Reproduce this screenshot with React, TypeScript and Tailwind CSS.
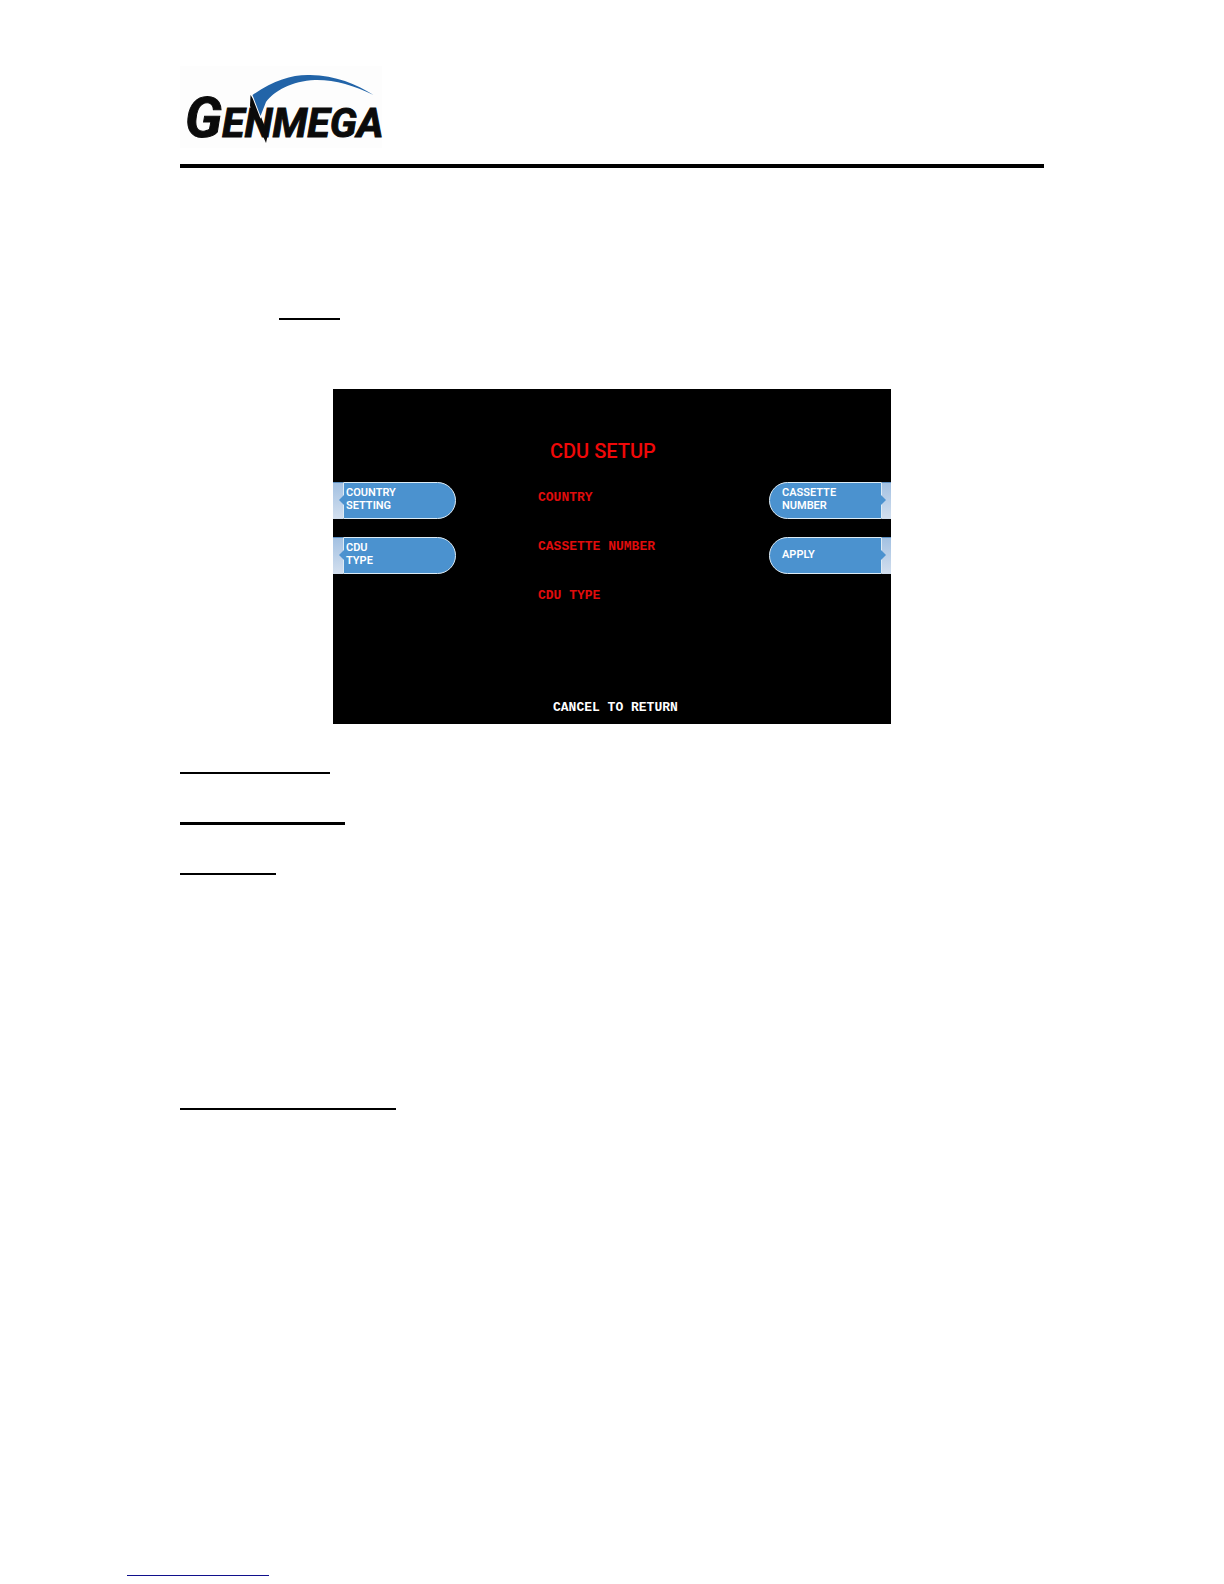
import clsx from "clsx";

const leftKeys = [
    { id: "country", lines: ["COUNTRY", "SETTING"] },
    { id: "type", lines: ["CDU", "TYPE"] }
];

const rightKeys = [
    { id: "cassette", lines: ["CASSETTE", "NUMBER"] },
    { id: "apply", lines: ["APPLY"] }
];

const fields = ["COUNTRY", "CASSETTE NUMBER", "CDU TYPE"];

function Logo() {
    return (
        <svg width="204" height="88" viewBox="0 0 204 88" role="img" aria-label="Genmega" className="block">
            <rect x="0" y="2" width="202" height="82" fill="#fdfdfd" />
            <text
                x="5"
                y="73"
                fill="#0b0b0b"
                stroke="#0b0b0b"
                strokeWidth="1"
                className="font-[Roboto,sans-serif] font-bold italic"
            >
                <tspan fontSize="56">G</tspan>
                <tspan fontSize="41">ENMEGA</tspan>
            </text>
            {/* spike running down through the N */}
            <path d="M70.500 31 L74 36 L88 70 L86 79 L82 70 L70 42 Z" fill="#0b0b0b" />
            {/* swoosh */}
            <path
                d="M72.500 31 C94 16 112 10.500 130 11 C156 11.500 176 20 193.500 31 C174 21.500 154 15.500 135 16 C112 17 94 27 86 38 L80.500 52 Z"
                fill="#2264a8"
                stroke="#fdfdfd"
                strokeWidth="2"
                paintOrder="stroke"
            />
        </svg>
    );
}

function SoftKey({ lines, side }: { lines: string[]; side: "left" | "right" }) {
    const isLeft = side === "left";

    return (
        <button type="button" className={clsx("flex h-[37px] w-full text-left", !isLeft && "flex-row-reverse")}>
            <span
                className={clsx(
                    "relative h-full shrink-0 border-t border-[#5d8fc0] bg-gradient-to-b from-[#a3c1e2] to-[#d3dfee]",
                    isLeft ? "w-[10px]" : "w-[9px]"
                )}
            >
                <svg
                    width="5"
                    height="10"
                    viewBox="0 0 5 10"
                    className={clsx("absolute top-3 z-10", isLeft ? "-right-px" : "-left-px rotate-180")}
                >
                    <path d="M5 0 L0 5 L5 10 Z" fill="#4b92cf" />
                </svg>
            </span>
            <span
                className={clsx(
                    "flex h-full flex-1 flex-col justify-center border border-[#dcebf5] bg-[#4b92cf] pb-[3px] font-[Roboto,sans-serif] text-[11px] leading-[13px] font-semibold text-white",
                    isLeft ? "rounded-r-full pl-[2px]" : "rounded-l-full pl-3"
                )}
            >
                {lines.map((line) => (
                    <span key={line}>{line}</span>
                ))}
            </span>
        </button>
    );
}

function CduScreen() {
    return (
        <section className="mx-auto mt-[69px] w-full max-w-[558px] bg-black pt-12 pb-[9px]">
            <h1 className="pl-[217px] font-[Roboto,sans-serif] text-[20px] leading-7 font-medium text-[#f00808]">CDU SETUP</h1>

            <div className="mt-[17px] flex">
                <div className="flex w-[123px] flex-col gap-[18px]">
                    {leftKeys.map((key) => (
                        <SoftKey key={key.id} lines={key.lines} side="left" />
                    ))}
                </div>
                <ul className="flex flex-1 flex-col gap-[34px] pt-2 pl-[82px] font-['Liberation_Mono',monospace] text-[13px] leading-[15px] font-bold text-[#e00c0c]">
                    {fields.map((field) => (
                        <li key={field}>{field}</li>
                    ))}
                </ul>
                <div className="flex w-[122px] flex-col gap-[18px]">
                    {rightKeys.map((key) => (
                        <SoftKey key={key.id} lines={key.lines} side="right" />
                    ))}
                </div>
            </div>

            <p className="mt-[97px] pl-[220px] font-['Liberation_Mono',monospace] text-[13px] leading-[15px] font-bold text-white">
                CANCEL TO RETURN
            </p>
        </section>
    );
}

export default function App() {
    return (
        <div className="flex min-h-screen flex-col bg-white">
            <main className="mx-auto w-full max-w-[864px]">
                <header className="border-b-4 border-black pt-16 pb-3">
                    <Logo />
                </header>

                <hr className="mt-[150px] ml-[99px] w-[61px] border-t-2 border-black" />

                <CduScreen />

                <hr className="mt-12 w-[150px] border-t-2 border-black" />
                <hr className="mt-12 w-[165px] border-t-3 border-black" />
                <hr className="mt-12 w-24 border-t-2 border-black" />
                <hr className="mt-[233px] w-[216px] border-t-2 border-black" />
            </main>

            <footer className="mt-auto px-[127px] pb-2">
                <hr className="w-[142px] border-t border-[#10108c]" />
            </footer>
        </div>
    );
}
